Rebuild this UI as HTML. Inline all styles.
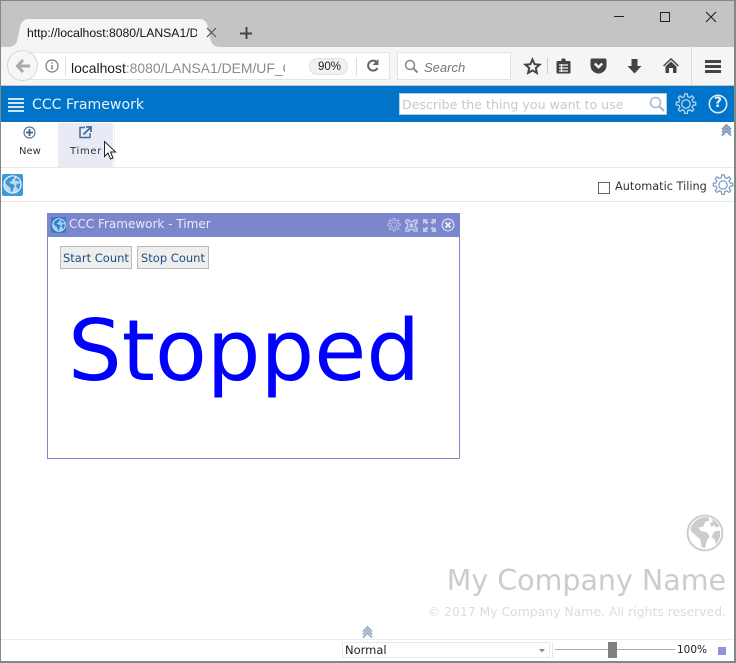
<!DOCTYPE html>
<html><head><meta charset="utf-8"><style>
html,body{margin:0;padding:0;width:736px;height:663px;overflow:hidden;background:#fff}
.a{position:absolute}
.t{position:absolute;white-space:nowrap;font-family:"DejaVu Sans",sans-serif}
.l{position:absolute;white-space:nowrap;font-family:"Liberation Sans",sans-serif}
svg{position:absolute;overflow:visible}
</style></head><body>
<svg width="0" height="0" style="position:absolute"><defs>
<g id="gear"><path fill="none" stroke-width="1.400" d="M10.600 1h2.800l.5 3 2.100.9 2.500-1.800 2 2-1.800 2.500.9 2.100 3 .5v2.800l-3 .5-.9 2.100 1.800 2.500-2 2-2.500-1.800-2.100.9-.5 3h-2.800l-.5-3-2.100-.9-2.500 1.800-2-2 1.800-2.500-.9-2.100-3-.5v-2.800l3-.5.9-2.100-1.800-2.500 2-2 2.500 1.800 2.100-.9z"/><circle cx="12" cy="12" r="4.600" fill="none" stroke-width="1.400"/></g>
<g id="globe"><circle cx="12" cy="12" r="11" fill="none" stroke-width="1.200"/><path stroke="none" d="M5 5.500C7 3 11 1.500 14 2l1 2-3 1-1 3-3 .5 1 2 4 1 2 2.500-2 3-1 4.500-2-.5-1-5-3-2.500-3-3C2.500 9 3.500 7 5 5.500zM16 3c2 1 4 2.500 5 5l-2 .5-1-1.500-2 1-1-2 2-1zM18 11l3.500-.5c.6 3-.3 6-2.500 8.500l-1-3-2-1.500z"/></g>
<g id="chev"><path fill="none" stroke-width="1.900" d="M1 5.500l4.500-4.500 4.500 4.500M1 8.500l4.500-4.500 4.500 4.500M1 11.500l4.500-4.500 4.500 4.500"/></g>
</defs></svg>

<!-- browser chrome -->
<div class="a" style="left:0;top:0;width:736px;height:47px;background:#c4c4c4"></div>
<div class="a" style="left:0;top:47px;width:736px;height:38px;background:#f5f5f5"></div>
<div class="a" style="left:0;top:85px;width:736px;height:1px;background:#b9c6d2"></div>
<svg style="left:0;top:0" width="240" height="48"><path fill="#f5f5f5" d="M8 47c6 0 9-3 10-10l2-10c1-5 4-8 9-8h170c5 0 8 3 9 8l2 10c1 7 4 10 10 10z"/></svg>
<div class="l" style="left:27px;top:26px;font-size:12.200px;color:#111;width:170px;overflow:hidden">http://localhost:8080/LANSA1/D</div>
<svg style="left:206px;top:27px" width="12" height="12"><path stroke="#555" stroke-width="1.200" d="M1 1l9 9M10 1l-9 9"/></svg>
<svg style="left:240px;top:27px" width="13" height="13"><path stroke="#444" stroke-width="2" d="M6.500 0v12M0 6.500h12"/></svg>
<svg style="left:614px;top:10px" width="110" height="14"><path stroke="#222" d="M0 6.500h10"/><rect x="46.500" y="2.500" width="9" height="9" fill="none" stroke="#222" stroke-width="1"/><path stroke="#222" stroke-width="1.100" d="M92 2l10 10M102 2l-10 10"/></svg>

<!-- url bar -->
<div class="a" style="left:20px;top:52px;width:370px;height:28px;background:#fff;border:1px solid #e4e4e4;box-sizing:border-box;border-radius:2px"></div>
<div class="a" style="left:7px;top:50px;width:31px;height:31px;background:#f6f6f6;border:1px solid #d8d8d8;border-radius:50%;box-sizing:border-box"></div>
<svg style="left:15px;top:58px" width="16" height="16"><path fill="none" stroke="#aaa" stroke-width="3" d="M8 2L2.500 8 8 14M3 8h12"/></svg>
<svg style="left:45px;top:59px" width="14" height="14"><circle cx="7" cy="7" r="6" fill="none" stroke="#777" stroke-width="1.200"/><path stroke="#777" stroke-width="1.400" d="M7 6v4.500M7 3.200v1.500"/></svg>
<div class="a" style="left:65px;top:56px;width:1px;height:20px;background:#ddd"></div>
<div class="l" style="left:71px;top:60px;font-size:13.900px;color:#1c1c1c;width:214px;overflow:hidden">localhost<span style="color:#8f8a86">:8080/LANSA1/DEM/UF_C</span></div>
<div class="a" style="left:309px;top:58px;width:39px;height:17px;border-radius:9px;background:#f1f1f1;border:1px solid #e2e2e2;box-sizing:border-box"></div>
<div class="l" style="left:318px;top:61px;font-size:11.500px;color:#222">90%</div>
<div class="a" style="left:356px;top:58px;width:1px;height:18px;background:#ddd"></div>
<svg style="left:366px;top:59px" width="14" height="14"><path fill="none" stroke="#666" stroke-width="2" d="M11 3.500A5 5 0 1 0 11.500 9"/><path fill="#666" d="M12.500 0v6h-6z"/></svg>
<div class="a" style="left:397px;top:52px;width:114px;height:28px;background:#fff;border:1px solid #e4e4e4;box-sizing:border-box"></div>
<svg style="left:404px;top:59px" width="15" height="15"><circle cx="6" cy="6" r="4.500" fill="none" stroke="#888" stroke-width="1.500"/><path stroke="#888" stroke-width="2" d="M9.500 9.500l4 4"/></svg>
<div class="l" style="left:424px;top:60px;font-size:13px;font-style:italic;color:#777">Search</div>
<svg style="left:524px;top:58px" width="17" height="17"><path fill="none" stroke="#444" stroke-width="2" d="M8.500 1.500l2.100 4.700 5 .5-3.800 3.300 1.100 5-4.400-2.600-4.400 2.600 1.100-5L1.400 6.700l5-.5z"/></svg>
<div class="a" style="left:547px;top:58px;width:1px;height:16px;background:#ccc"></div>
<svg style="left:556px;top:58px" width="15" height="16"><path fill="#444" d="M1.500 3H5l1-2.500h3L10 3h3.500a1 1 0 0 1 1 1v10.500a1 1 0 0 1-1 1h-12a1 1 0 0 1-1-1V4a1 1 0 0 1 1-1z"/><path stroke="#f5f5f5" stroke-width="1.300" d="M3 7h9M3 10h9M3 13h9M5.500 6v8"/></svg>
<svg style="left:590px;top:58px" width="17" height="16"><path fill="#444" d="M2 .5h13a1.500 1.500 0 0 1 1.500 1.500v5.500a8 8 0 0 1-16 0V2A1.500 1.500 0 0 1 2 .5z"/><path fill="none" stroke="#f5f5f5" stroke-width="2.400" d="M4.800 5.500l3.700 3.700 3.700-3.700"/></svg>
<svg style="left:627px;top:59px" width="15" height="15"><path fill="#444" d="M4.500 0h6v7h4l-7 7.500L.500 7h4z"/></svg>
<svg style="left:663px;top:58px" width="16" height="16"><path fill="#444" d="M8 0l8 7.500-1 1L8 2 1 8.500l-1-1zM8 3.500l5.500 5V15H10v-5H6v5H2.500V8.500z"/></svg>
<div class="a" style="left:691px;top:47px;width:1px;height:38px;background:#ddd"></div>
<div class="a" style="left:705px;top:60px;width:16px;height:3px;background:#444"></div>
<div class="a" style="left:705px;top:65px;width:16px;height:3px;background:#444"></div>
<div class="a" style="left:705px;top:70px;width:16px;height:3px;background:#444"></div>

<!-- blue header -->
<div class="a" style="left:0;top:86px;width:736px;height:36px;background:#0074c8"></div>
<div class="a" style="left:8px;top:98px;width:16px;height:14px;background:repeating-linear-gradient(#cfe5f6 0 2px,#0074c8 2px 4px)"></div>
<div class="t" style="left:32px;top:97px;font-size:14.100px;color:#e6f2fb">CCC Framework</div>
<div class="a" style="left:399px;top:93px;width:268px;height:22px;background:#fff;border:1px solid #b8cfe2;box-sizing:border-box"></div>
<div class="t" style="left:402px;top:97px;font-size:12.600px;line-height:15px;color:#c8c8c8">Describe the thing you want to use</div>
<svg style="left:649px;top:96px" width="16" height="16"><circle cx="6.500" cy="6.500" r="5" fill="none" stroke="#a8bccb" stroke-width="1.600"/><path stroke="#a8bccb" stroke-width="2.200" d="M10 10l5 5"/></svg>
<svg style="left:675px;top:93px" width="22" height="22" viewBox="0 0 24 24" stroke="#b5d6ee"><use href="#gear"/></svg>
<svg style="left:708px;top:94px" width="20" height="20"><circle cx="10" cy="10" r="8.700" fill="none" stroke="#d8eaf7" stroke-width="1.600"/></svg>
<div class="t" style="left:714px;top:95px;font-size:14px;font-weight:bold;color:#e6f2fb">?</div>

<!-- toolbar -->
<div class="a" style="left:58px;top:123px;width:55px;height:44px;background:#e8ebf5"></div>
<div class="a" style="left:114px;top:123px;width:1px;height:44px;background:#f0f0f0"></div>
<svg style="left:23px;top:126px" width="13" height="13"><circle cx="6.500" cy="6.500" r="5.500" fill="none" stroke="#5b7a97" stroke-width="1.200"/><path stroke="#3e6283" stroke-width="1.800" d="M6.500 3v7M3 6.500h7"/></svg>
<svg style="left:79px;top:126px" width="13" height="13"><path fill="none" stroke="#3e6f99" stroke-width="1.500" d="M6 1.500H1v10h10V7"/><path stroke="#3e6f99" stroke-width="1.800" fill="none" d="M4.500 8.500L11 2M7 1h5v5"/></svg>
<div class="t" style="left:19px;top:146px;font-size:10px;line-height:12px;color:#333">New</div>
<div class="t" style="left:70px;top:146px;font-size:10px;line-height:12px;letter-spacing:.7px;color:#333">Timer</div>
<svg style="left:104px;top:141px" width="13" height="20"><path fill="#fff" stroke="#222" stroke-width="1" d="M.5.500v15l3.500-3.500 2.500 6 2.500-1-2.500-6h5z"/></svg>
<svg style="left:721px;top:124px" width="12" height="13" stroke="#7d9ab5"><use href="#chev"/></svg>
<div class="a" style="left:0;top:167px;width:736px;height:1px;background:#e8e8e8"></div>

<!-- second row -->
<div class="a" style="left:2px;top:174px;width:21px;height:22px;background:#3c9ad9;border-radius:2px"></div>
<svg style="left:3px;top:175px" width="19" height="19" viewBox="0 0 24 24" fill="#3f95d6" stroke="#e6f3fb"><circle cx="12" cy="12" r="11" fill="#bcdcf2" stroke="none"/><use href="#globe"/></svg>
<div class="a" style="left:598px;top:182px;width:12px;height:12px;border:1px solid #666;box-sizing:border-box;background:#fff"></div>
<div class="t" style="left:615px;top:180px;font-size:11.300px;color:#333">Automatic Tiling</div>
<svg style="left:712px;top:174px" width="22" height="22" viewBox="0 0 24 24" stroke="#7fa0bc"><use href="#gear"/></svg>
<div class="a" style="left:0;top:201px;width:736px;height:1px;background:#e8e8e8"></div>

<!-- dialog -->
<div class="a" style="left:47px;top:213px;width:413px;height:246px;border:1px solid #7b86cc;box-sizing:border-box;background:#fff"></div>
<div class="a" style="left:47px;top:213px;width:413px;height:24px;background:#7b86cc"></div>
<div class="a" style="left:51px;top:217px;width:15px;height:16px;background:#2f7fca;border-radius:2px"></div>
<svg style="left:52px;top:218px" width="14" height="14" viewBox="0 0 24 24" fill="#2f7fca" stroke="#d9ecf8"><circle cx="12" cy="12" r="11" fill="#a9cfee" stroke="none"/><use href="#globe"/></svg>
<div class="t" style="left:69px;top:217px;font-size:12px;line-height:14px;color:#e8eaf8">CCC Framework - Timer</div>
<svg style="left:387px;top:218px" width="14" height="14" viewBox="0 0 24 24" stroke="#c3c9ea"><use href="#gear"/></svg>
<svg style="left:405px;top:219px" width="13" height="13"><path fill="none" stroke="#c3c9ea" stroke-width="1.500" d="M1 1h3v1.500h5V1h3v3h-1.500v5H12v3H9v-1.500H4V12H1V9h1.500V4H1z"/><rect x="4.500" y="4.500" width="4" height="4" fill="#c3c9ea"/></svg>
<svg style="left:423px;top:219px" width="13" height="13"><path fill="#c3c9ea" d="M0 0h5L3.500 1.500 5.500 3.500 3.500 5.500 1.500 3.500 0 5zM13 0v5L11.500 3.500 9.500 5.500 7.500 3.500 9.500 1.500 8 0zM0 13V8l1.500 1.500 2-2 2 2-2 2L5 13zM13 13H8l1.500-1.500-2-2 2-2 2 2L13 8z"/></svg>
<svg style="left:441px;top:218px" width="14" height="14"><circle cx="7" cy="7" r="5.800" fill="none" stroke="#d5d9f0" stroke-width="1.300"/><path stroke="#e6e8f6" stroke-width="2" d="M4.500 4.500l5 5M9.500 4.500l-5 5"/></svg>

<div class="a" style="left:60px;top:246px;width:72px;height:23px;background:#eee;border:1px solid #bbb;box-sizing:border-box"></div>
<div class="t" style="left:63px;top:251px;font-size:11.500px;color:#1c4f80">Start Count</div>
<div class="a" style="left:137px;top:246px;width:72px;height:23px;background:#eee;border:1px solid #bbb;box-sizing:border-box"></div>
<div class="t" style="left:141px;top:251px;font-size:11.500px;color:#1c4f80">Stop Count</div>
<div class="t" style="left:68px;top:296px;font-size:84.700px;line-height:109px;color:#0000ff">Stopped</div>

<!-- brand -->
<svg style="left:686px;top:514px" width="38" height="38" viewBox="0 0 24 24" fill="#ccc" stroke="#ccc"><use href="#globe"/></svg>
<div class="t" style="right:10px;top:564px;font-size:28.500px;line-height:34px;color:#ccc">My Company Name</div>
<div class="t" style="right:10px;top:604px;font-size:12.400px;line-height:15px;color:#dcdcdc">© 2017 My Company Name. All rights reserved.</div>

<!-- status bar -->
<svg style="left:362px;top:626px" width="12" height="13" stroke="#9bb2c8"><use href="#chev"/></svg>
<div class="a" style="left:0;top:639px;width:736px;height:1px;background:#eaeaea"></div>
<div class="a" style="left:342px;top:642px;width:208px;height:16px;border:1px solid #e8e8e8;box-sizing:border-box;background:#fff"></div>
<div class="t" style="left:345px;top:643px;font-size:11.500px;color:#222">Normal</div>
<svg style="left:539px;top:649px" width="6" height="4"><path fill="#888" d="M0 0h6L3 3.500z"/></svg>
<div class="a" style="left:552px;top:642px;width:1px;height:16px;background:#e8e8e8"></div>
<div class="a" style="left:555px;top:649px;width:120px;height:1px;background:#aaa"></div>
<div class="a" style="left:608px;top:642px;width:9px;height:16px;background:#808080"></div>
<div class="t" style="left:677px;top:644px;font-size:10.500px;color:#222">100%</div>
<div class="a" style="left:718px;top:647px;width:8px;height:8px;background:#8f97d3"></div>

<!-- window border -->
<div class="a" style="left:0;top:0;width:736px;height:663px;border:1px solid #7f8a85;border-width:1px 2px 2px 1px;box-sizing:border-box"></div>
</body></html>
